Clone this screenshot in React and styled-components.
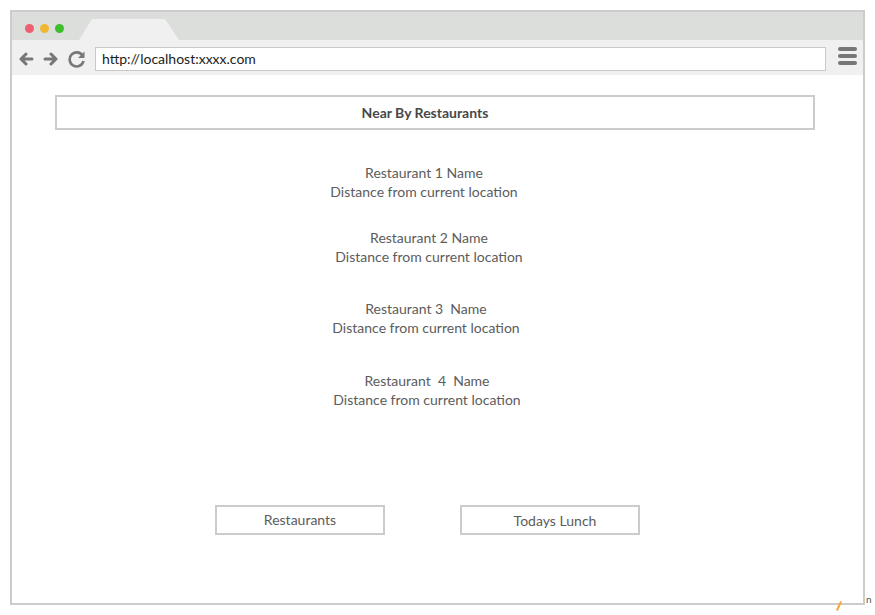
import React from "react";
import styled, { createGlobalStyle } from "styled-components";

const GlobalStyle = createGlobalStyle`
  body {
    margin: 0;
    background: #fff;
    font-family: Lato, "Open Sans", sans-serif;
  }
`;

const Page = styled.div`
  position: relative;
  width: 875px;
  height: 615px;
  padding: 10px 0 0 10px;
  box-sizing: border-box;
`;

const Frame = styled.div`
  width: 855px;
  height: 595px;
  border: 2px solid #cccccc;
  box-sizing: border-box;
  display: flex;
  flex-direction: column;
  background: #fff;
`;

const TitleBar = styled.div`
  height: 28px;
  background: #dcdedb;
  display: flex;
  align-items: stretch;
  padding-left: 13px;
`;

const Dots = styled.div`
  display: flex;
  align-items: center;
  gap: 6px;
  padding-top: 5px;
`;

const Dot = styled.span`
  width: 9px;
  height: 9px;
  border-radius: 50%;
  background: ${({ color }) => color};
`;

const Tab = styled.div`
  align-self: flex-end;
  margin-left: 15px;
  width: 100px;
  height: 21px;
  background: #f0f0f0;
  clip-path: polygon(13% 0, 86% 0, 100% 100%, 0 100%);
`;

const Toolbar = styled.div`
  height: 35px;
  background: #f0f0f0;
  display: flex;
  align-items: center;
  padding: 2px 0 0 6px;
  box-sizing: border-box;
`;

const NavIcons = styled.div`
  display: flex;
  align-items: center;
  gap: 9px;
  width: 77px;
  padding-top: 1px;
`;

const Address = styled.div`
  flex: 1;
  height: 24px;
  box-sizing: border-box;
  background: #fff;
  border: 1px solid #c8c8c8;
  display: flex;
  align-items: center;
  padding-left: 6px;
  font-size: 14px;
  color: #222;
`;

const Menu = styled.div`
  width: 19px;
  margin: 0 6px 0 12px;
  display: flex;
  flex-direction: column;
  gap: 3px;
  padding-bottom: 5px;
`;

const MenuBar = styled.span`
  height: 4px;
  border-radius: 2px;
  background: #777;
`;

const Content = styled.div`
  flex: 1;
  display: flex;
  flex-direction: column;
  padding: 20px 0 0 43px;
`;

const Header = styled.div`
  width: 760px;
  height: 35px;
  box-sizing: border-box;
  border: 2px solid #cccccc;
  display: flex;
  align-items: center;
  justify-content: center;
  padding-right: 20px;
  font-size: 14px;
  font-weight: 700;
  color: #484848;
`;

const List = styled.div`
  display: flex;
  flex-direction: column;
  width: 760px;
  padding-top: 33px;
`;

const Item = styled.div`
  display: flex;
  flex-direction: column;
  align-items: center;
  margin-top: ${({ gap }) => gap}px;
  padding-right: ${({ shift }) => shift}px;
  font-size: 14px;
  line-height: 19px;
  color: #5c5c5c;
  white-space: pre;
`;

const Buttons = styled.div`
  display: flex;
  gap: 75px;
  padding: 96px 0 0 160px;
`;

const Button = styled.button`
  width: ${({ w }) => w}px;
  height: 30px;
  box-sizing: border-box;
  background: #fff;
  border: 2px solid #cccccc;
  font-family: Lato, "Open Sans", sans-serif;
  font-size: 14px;
  color: #5c5c5c;
  padding: 0 0 ${({ lift }) => lift}px ${({ indent }) => indent}px;
`;

const Stray = styled.span`
  position: absolute;
  left: 866px;
  top: 593px;
  font-size: 10px;
  color: #555;
`;

const Slash = styled.span`
  position: absolute;
  left: 838px;
  top: 601px;
  width: 2px;
  height: 10px;
  background: #f7a83a;
  transform: rotate(25deg);
`;

const restaurants = [
  { name: "Restaurant 1 Name", gap: 0, shift: 22 },
  { name: "Restaurant 2 Name", gap: 27, shift: 12 },
  { name: "Restaurant 3  Name", gap: 33, shift: 18 },
  { name: "Restaurant  4  Name", gap: 34, shift: 16 },
];

const Arrow = ({ flip }) => (
  <svg width="16" height="14" viewBox="0 0 16 14" style={{ transform: flip ? "scaleX(-1)" : "none" }}>
    <path d="M14 7H3M8 2L3 7l5 5" fill="none" stroke="#777" strokeWidth="3" strokeLinecap="round" strokeLinejoin="round" />
  </svg>
);

const Refresh = () => (
  <svg width="18" height="18" viewBox="0 0 18 18">
    <path d="M14.5 5.5A7 7 0 1 0 15.5 11" fill="none" stroke="#777" strokeWidth="2.6" />
    <path d="M16.5 1.5V8H10z" fill="#777" />
  </svg>
);

export default function App() {
  return (
    <Page>
      <GlobalStyle />
      <Frame>
        <TitleBar>
          <Dots>
            <Dot color="#ee5f6f" />
            <Dot color="#f0b731" />
            <Dot color="#3bbf2b" />
          </Dots>
          <Tab />
        </TitleBar>
        <Toolbar>
          <NavIcons>
            <Arrow />
            <Arrow flip />
            <Refresh />
          </NavIcons>
          <Address>http://localhost:xxxx.com</Address>
          <Menu>
            <MenuBar />
            <MenuBar />
            <MenuBar />
          </Menu>
        </Toolbar>
        <Content>
          <Header>Near By Restaurants</Header>
          <List>
            {restaurants.map((r) => (
              <Item key={r.name} gap={r.gap} shift={r.shift}>
                <span>{r.name}</span>
                <span>Distance from current location</span>
              </Item>
            ))}
          </List>
          <Buttons>
            <Button w={170} lift={2} indent={0}>Restaurants</Button>
            <Button w={180} lift={0} indent={10}>Todays Lunch</Button>
          </Buttons>
        </Content>
      </Frame>
      <Stray>n</Stray>
      <Slash />
    </Page>
  );
}
